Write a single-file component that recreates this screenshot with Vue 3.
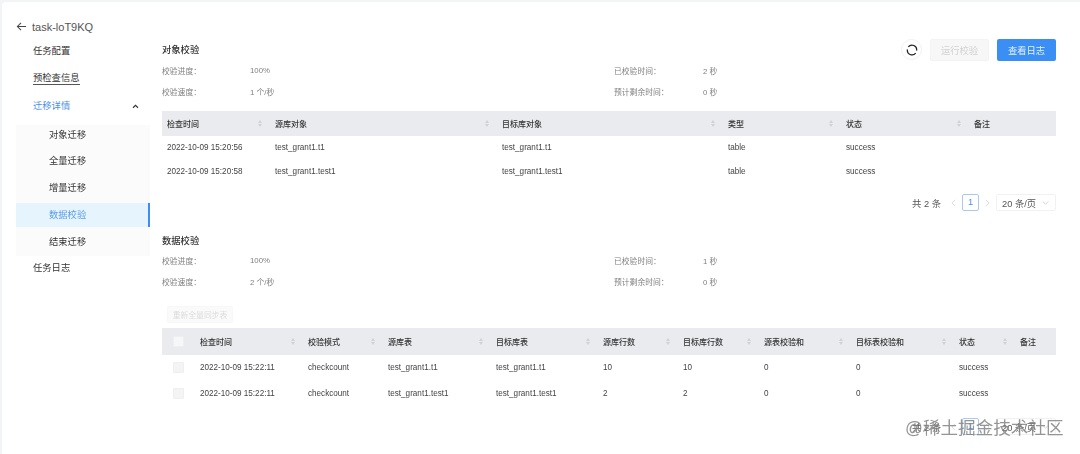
<script setup>
const menuTop = ['任务配置', '预检查信息']
const subs = ['对象迁移', '全量迁移', '增量迁移', '数据校验', '结束迁移']
const cols1 = [
  { t: '检查时间', w: 108 }, { t: '源库对象', w: 227 }, { t: '目标库对象', w: 226 },
  { t: '类型', w: 118 }, { t: '状态', w: 128 }, { t: '备注', w: 87 }
]
const rows1 = [
  ['2022-10-09 15:20:56', 'test_grant1.t1', 'test_grant1.t1', 'table', 'success', ''],
  ['2022-10-09 15:20:58', 'test_grant1.test1', 'test_grant1.test1', 'table', 'success', '']
]
const cols2 = [
  { t: '检查时间', w: 108 }, { t: '校验模式', w: 80 }, { t: '源库表', w: 108 }, { t: '目标库表', w: 107 },
  { t: '源库行数', w: 80 }, { t: '目标库行数', w: 81 }, { t: '源表校验和', w: 92 },
  { t: '目标表校验和', w: 103 }, { t: '状态', w: 61 }, { t: '备注', w: 36 }
]
const rows2 = [
  ['2022-10-09 15:22:11', 'checkcount', 'test_grant1.t1', 'test_grant1.t1', '10', '10', '0', '0', 'success', ''],
  ['2022-10-09 15:22:11', 'checkcount', 'test_grant1.test1', 'test_grant1.test1', '2', '2', '0', '0', 'success', '']
]
</script>

<template>
  <div class="page">
    <div class="card">
      <aside class="side">
        <div class="back">
          <svg class="back-ico" viewBox="0 0 12 12" width="11" height="11" fill="none" stroke="#444" stroke-width="1.1">
            <path d="M11 6H1.5M5.5 2L1.5 6l4 4" />
          </svg>
          <span>task-loT9KQ</span>
        </div>
        <div class="mi">{{ menuTop[0] }}</div>
        <div class="mi"><span class="ul">{{ menuTop[1] }}</span></div>
        <div class="mi blue open">
          <span>迁移详情</span>
          <svg viewBox="0 0 8 6" width="7" height="5" fill="none" stroke="#333" stroke-width="1.3"><path d="M1 4.5L4 1.5l3 3" /></svg>
        </div>
        <div class="subs">
          <div v-for="s in subs" :key="s" class="si" :class="{ on: s === '数据校验' }">{{ s }}</div>
        </div>
        <div class="mi last">任务日志</div>
      </aside>

      <main class="main">
        <section class="sec first">
          <div class="head">
            <h3>对象校验</h3>
            <div class="actions">
              <span class="round">
                <svg viewBox="0 0 12 12" width="12" height="12" fill="none" stroke="#222" stroke-width="1.2">
                  <path d="M2.3 2.9A4.7 4.7 0 0 1 10.6 6.6" />
                  <path d="M9.7 9.1A4.7 4.7 0 0 1 1.4 5.4" />
                </svg>
              </span>
              <span class="btn off">运行校验</span>
              <span class="btn pri">查看日志</span>
            </div>
          </div>
          <div class="info">
            <span class="k">校验进度：</span><span class="v">100%</span><span class="k">已校验时间：</span><span class="v">2 秒</span>
            <span class="k">校验速度：</span><span class="v">1 个/秒</span><span class="k">预计剩余时间：</span><span class="v">0 秒</span>
          </div>
          <div class="table t1">
            <div class="tr th">
              <div v-for="(c, i) in cols1" :key="c.t" class="td" :style="{ width: c.w + 'px' }">
                <span>{{ c.t }}</span>
                <span v-if="i < 5" class="sort"><i class="up"></i><i class="down"></i></span>
              </div>
            </div>
            <div v-for="(r, ri) in rows1" :key="ri" class="tr">
              <div v-for="(v, i) in r" :key="i" class="td" :style="{ width: cols1[i].w + 'px' }">{{ v }}</div>
            </div>
          </div>
          <div class="pager">
            <span class="tot">共 2 条</span>
            <span class="ar"><svg viewBox="0 0 6 10" width="5" height="8" fill="none" stroke="#d0d0d0" stroke-width="1"><path d="M5 1L1 5l4 4" /></svg></span>
            <span class="cur">1</span>
            <span class="ar"><svg viewBox="0 0 6 10" width="5" height="8" fill="none" stroke="#d0d0d0" stroke-width="1"><path d="M1 1l4 4-4 4" /></svg></span>
            <span class="size">20 条/页
              <svg viewBox="0 0 8 5" width="7" height="4" fill="none" stroke="#bbb" stroke-width=".8"><path d="M.5.5L4 4 7.5.5" /></svg>
            </span>
          </div>
        </section>

        <section class="sec second">
          <h3>数据校验</h3>
          <div class="info">
            <span class="k">校验进度：</span><span class="v">100%</span><span class="k">已校验时间：</span><span class="v">1 秒</span>
            <span class="k">校验速度：</span><span class="v">2 个/秒</span><span class="k">预计剩余时间：</span><span class="v">0 秒</span>
          </div>
          <span class="btn reset">重新全量同步表</span>
          <div class="table t2">
            <div class="tr th">
              <div class="cbcell"><i class="cb head-cb"></i></div>
              <div v-for="(c, i) in cols2" :key="c.t" class="td" :style="{ width: c.w + 'px' }">
                <span>{{ c.t }}</span>
                <span v-if="i < 9" class="sort"><i class="up"></i><i class="down"></i></span>
              </div>
            </div>
            <div v-for="(r, ri) in rows2" :key="ri" class="tr">
              <div class="cbcell"><i class="cb"></i></div>
              <div v-for="(v, i) in r" :key="i" class="td" :style="{ width: cols2[i].w + 'px' }">{{ v }}</div>
            </div>
          </div>
          <div class="pager lower">
            <span class="tot">共 2 条</span>
            <span class="ar"><svg viewBox="0 0 6 10" width="5" height="8" fill="none" stroke="#d0d0d0" stroke-width="1"><path d="M5 1L1 5l4 4" /></svg></span>
            <span class="cur">1</span>
            <span class="ar"><svg viewBox="0 0 6 10" width="5" height="8" fill="none" stroke="#d0d0d0" stroke-width="1"><path d="M1 1l4 4-4 4" /></svg></span>
            <span class="size">20 条/页
              <svg viewBox="0 0 8 5" width="7" height="4" fill="none" stroke="#bbb" stroke-width=".8"><path d="M.5.5L4 4 7.5.5" /></svg>
            </span>
          </div>
        </section>
      </main>
    </div>
    <div class="mark">@稀土掘金技术社区</div>
  </div>
</template>

<style>
html, body { margin: 0; background: #fff; }
</style>

<style scoped>
.page {
  position: relative;
  width: 1080px;
  height: 454px;
  overflow: hidden;
  background: #f3f4f5;
  box-sizing: border-box;
  padding: 2px 0 0 2px;
  font-family: "Liberation Sans", "Noto Sans CJK SC", sans-serif;
  color: #444;
}
.card {
  display: flex;
  height: 452px;
  background: #fff;
  border-top-left-radius: 4px;
  box-sizing: border-box;
  padding-left: 14px;
  filter: blur(0.35px);
}
.side { width: 134px; flex: none; font-size: 9.3px; color: #333; }
.back { display: flex; align-items: center; gap: 5px; height: 15px; margin-top: 17px; margin-bottom: 4px; font-size: 11px; color: #555; }
.back-ico { flex: none; }
.mi { height: 27px; line-height: 27px; padding-left: 17px; padding-right: 11px; display: flex; justify-content: space-between; align-items: center; }
.ul { border-bottom: 1px solid #555; line-height: 11px; }
.blue { color: #4a90e8; margin-top: 1px; }
.subs { background: #fbfbfb; width: 134px; margin-top: 5px; }
.si { height: 27px; line-height: 27px; padding-left: 33px; box-sizing: border-box; }
.si:first-child { height: 20px; line-height: 20px; margin-bottom: 3px; }
.si.on { background: #e6f4fe; color: #5a9de8; border-right: 2px solid #3f8cf0; height: 24px; line-height: 24px; margin: 1px 0 2px; }
.last { height: 24px; line-height: 24px; }
.main { width: 894px; margin-left: 12px; flex: none; }
.sec.first { padding-top: 37px; }
.sec.second { padding-top: 19px; }
h3 { margin: 0; font-size: 9.3px; line-height: 22px; font-weight: 500; color: #333; }
.head { display: flex; justify-content: space-between; align-items: center; height: 22px; }
.actions { display: flex; align-items: center; gap: 8px; margin-top: -1px; }
.round { width: 21px; height: 21px; border-radius: 50%; border: 1px solid #f0f0f0; box-sizing: border-box; display: flex; align-items: center; justify-content: center; }
.btn { display: inline-flex; align-items: center; justify-content: center; font-size: 9.3px; border-radius: 2px; box-sizing: border-box; }
.off { width: 59px; height: 22px; background: #f7f7f7; border: 1px solid #f3f3f3; color: #d2d2d2; }
.pri { width: 59px; height: 22px; background: #3b8ef3; color: #e8f2ff; }
.info {
  display: grid;
  grid-template-columns: 88px 364px 89px 1fr;
  grid-auto-rows: 21px;
  align-items: center;
  font-size: 7.8px;
  color: #808080;
}
.first .info { margin-top: -1px; }
.second .info { margin-top: -2px; }
.table { font-size: 8.15px; color: #444; }
.t1 { margin-top: 9px; }
.tr { display: flex; height: 24px; align-items: center; }
.th { background: #e9ebee; height: 25px; font-weight: 500; color: #333; font-size: 8px; }
.th + .tr { margin-top: -1px; }
.td { box-sizing: border-box; padding-left: 5px; padding-right: 8px; display: flex; justify-content: space-between; align-items: center; flex: none; height: 100%; }
.sort { display: inline-flex; flex-direction: column; gap: 1px; }
.up, .down { display: block; width: 0; height: 0; border-left: 2.5px solid transparent; border-right: 2.5px solid transparent; }
.up { border-bottom: 3px solid #d0d2d6; }
.down { border-top: 3px solid #d0d2d6; }
.pager { display: flex; justify-content: flex-end; align-items: center; height: 17px; margin-top: 11px; font-size: 9.3px; color: #555; }
.tot { margin-right: 4px; }
.ar { width: 17px; display: flex; justify-content: center; align-items: center; }
.cur { width: 17px; height: 17px; line-height: 15px; box-sizing: border-box; border: 1px solid #a9c9ef; border-radius: 2px; text-align: center; color: #4a90e8; }
.size { width: 60px; height: 17px; box-sizing: border-box; border: 1px solid #f1f1f1; border-radius: 2px; display: flex; align-items: center; justify-content: space-between; padding: 0 6px 0 5px; white-space: nowrap; }
.reset { display: flex; width: 66px; height: 17px; margin-top: 14px; margin-left: 5px; background: #fafafa; border: 1px solid #f7f7f7; color: #dcdcdc; font-size: 7.8px; white-space: nowrap; }
.t2 { margin-top: 5px; }
.t2 .th { height: 27px; }
.t2 .tr:not(.th) { height: 26px; }
.cbcell { width: 33px; flex: none; display: flex; align-items: center; padding-left: 11px; box-sizing: border-box; }
.cb { display: block; width: 11px; height: 11px; background: #f4f4f4; border: 1px solid #efefef; border-radius: 1px; box-sizing: border-box; }
.head-cb { background: #f6f7f8; }
.lower { margin-top: 12px; }
.mark {
  position: absolute;
  left: 905px;
  top: 416px;
  font-size: 17.6px;
  line-height: 24px;
  color: rgba(130, 130, 130, 0.85);
  white-space: nowrap;
}
</style>
